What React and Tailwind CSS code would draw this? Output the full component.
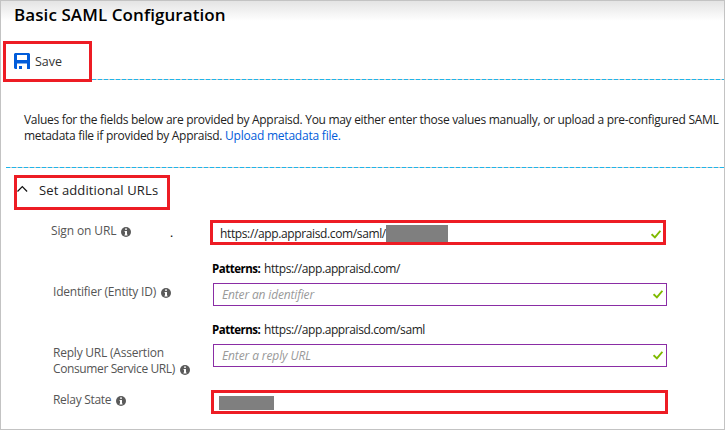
import React from 'react';

function Info({ className = '' }) {
  return (
    <svg className={`shrink-0 ${className}`} width="10" height="10" viewBox="0 0 10 10">
      <circle cx="5" cy="5" r="5" fill="#5a5a5a" />
      <path d="M4 1.5h2v1.3H4zM3.6 4H6v3.4h.5v1h-3v-1H4V5h-.4z" fill="#fff" />
    </svg>
  );
}

function Check({ className = '' }) {
  return (
    <svg className={`shrink-0 ${className}`} width="10" height="9" viewBox="0 0 10 9">
      <path d="M.6 4.2 3.9 7.4 9.4.8" fill="none" stroke="#7fba00" strokeWidth="1.9" />
    </svg>
  );
}

function Dashes({ className = '' }) {
  return (
    <div
      className={`h-px bg-[repeating-linear-gradient(90deg,#1fb5ea_0px,#1fb5ea_4px,#c9c9c9_4px,#c9c9c9_6px)] ${className}`}
    />
  );
}

function Pattern({ url, className = '' }) {
  return (
    <div className={`ml-[211px] flex h-4 text-[12px] leading-4 whitespace-nowrap text-[#222] ${className}`}>
      <span className="w-[52px] shrink-0 text-[11.5px] font-bold tracking-[-0.5px] text-black">Patterns:</span>
      <span className="tracking-[-0.4px]">{url}</span>
    </div>
  );
}

export default function App() {
  return (
    <div className="flex h-[430px] w-[725px] flex-col overflow-hidden border border-[#c3c3c3] bg-white font-['Open_Sans','Noto_Sans',sans-serif] text-[12px] text-[#333]">
      <header className="h-10 shrink-0 bg-linear-to-b from-[#e4e4e4] to-white to-50% pl-[13px]">
        <h1 className="h-7 text-[17px] leading-7 font-semibold tracking-[0.08px] whitespace-nowrap text-black">
          Basic SAML Configuration
        </h1>
      </header>

      <div className="flex h-[41px] shrink-0 items-end">
        <button className="ml-[2px] flex h-[41px] w-[89px] shrink-0 items-center border-[3px] border-[#ed1c24] bg-white pl-2">
          <svg className="-mt-px" width="16" height="16" viewBox="0 0 16 16">
            <path
              d="M1 0h14l1 1v15h-3v-5.5H3V16H1l-1-1V1zM3 2v5h10V2zM5 13h3v3H5z"
              fill="#015cda"
              fillRule="evenodd"
            />
          </svg>
          <span className="mt-px ml-[5px] text-[12.5px] leading-4">Save</span>
        </button>
        <Dashes className="mb-[2px] flex-1" />
      </div>

      <p className="mt-[30px] ml-[23px] h-8 shrink-0 text-[12px] leading-4 tracking-[-0.3px] whitespace-nowrap text-[#222]">
        Values for the fields below are provided by Appraisd. You may either enter those values manually, or upload a pre-configured SAML
        <br />
        metadata file if provided by Appraisd. <a className="tracking-[-0.22px] text-[#015cda]">Upload metadata file.</a>
      </p>

      <Dashes className="mt-[23px] ml-[5px] shrink-0" />

      <div className="mt-[7px] ml-[13px] flex h-[35px] w-[156px] shrink-0 items-start border-[3px] border-[#ed1c24]">
        <svg className="mt-[7px]" width="11" height="8" viewBox="0 0 11 8">
          <path d="M.5 6.5 5.3 1.5 10.1 6.5" fill="none" stroke="#111" strokeWidth="1.2" />
        </svg>
        <span className="mt-[2px] ml-[11px] text-[13px] leading-5 tracking-[0.12px] whitespace-nowrap text-[#222]">Set additional URLs</span>
      </div>

      <div className="mt-[10px] flex h-[26px] shrink-0 items-start">
        <div className="mt-[3px] flex h-4 w-[119px] items-center pl-[50px] leading-4 whitespace-nowrap text-[#555]">
          <span className="tracking-[-0.13px]">Sign on URL</span>
          <Info className="mt-[2px] ml-[5px]" />
        </div>
        <span className="mt-[5px] ml-[50px] w-10 leading-4 text-black">.</span>
        <div className="flex h-[25px] w-[456px] items-start border-[3px] border-[#ed1c24] pr-[2px] pl-[7px]">
          <span className="mt-[3px] w-[166px] leading-4 tracking-[-0.37px] whitespace-nowrap text-[#222]">https://app.appraisd.com/saml/</span>
          <div className="mt-[2px] h-[17px] w-[62px] bg-[#7f7f7f]" />
          <Check className="mt-[7px] ml-auto" />
        </div>
      </div>

      <Pattern url="https://app.appraisd.com/" className="mt-[15px] shrink-0" />

      <div className="mt-[6px] flex h-[23px] shrink-0 items-start">
        <div className="mt-px flex w-[212px] shrink-0 pl-[52px] leading-4 whitespace-nowrap text-[#555]">
          <span className="tracking-[-0.22px]">Identifier (Entity ID)</span>
          <Info className="mt-[4px] ml-[5px]" />
        </div>
        <div className="flex h-[23px] w-[454px] items-center border border-[#8a2da5] pr-[3px] pl-2">
          <span className="tracking-[-0.16px] text-[#999] italic">Enter an identifier</span>
          <Check className="ml-auto" />
        </div>
      </div>

      <Pattern url="https://app.appraisd.com/saml" className="mt-[16px] shrink-0" />

      <div className="mt-[6px] flex h-[46px] shrink-0 items-start">
        <div className="mt-px w-[212px] shrink-0 pl-[52px] leading-4 whitespace-nowrap text-[#555]">
          <div className="tracking-[-0.22px]">Reply URL (Assertion</div>
          <div className="flex">
            <span className="tracking-[-0.38px]">Consumer Service URL)</span>
            <Info className="mt-[4px] ml-[5px]" />
          </div>
        </div>
        <div className="flex h-[23px] w-[454px] items-center border border-[#8a2da5] pr-[3px] pl-2">
          <span className="tracking-[-0.12px] text-[#999] italic">Enter a reply URL</span>
          <Check className="ml-auto" />
        </div>
      </div>

      <div className="flex h-6 shrink-0 items-start">
        <div className="mt-[2px] flex w-[210px] shrink-0 pl-[52px] leading-4 whitespace-nowrap text-[#555]">
          <span className="tracking-[-0.3px]">Relay State</span>
          <Info className="mt-[4px] ml-[5px]" />
        </div>
        <div className="h-6 w-[457px] border-[3px] border-[#ed1c24] pt-[3px] pl-[5px]">
          <div className="h-[14px] w-[55px] bg-[#7f7f7f]" />
        </div>
      </div>
    </div>
  );
}
